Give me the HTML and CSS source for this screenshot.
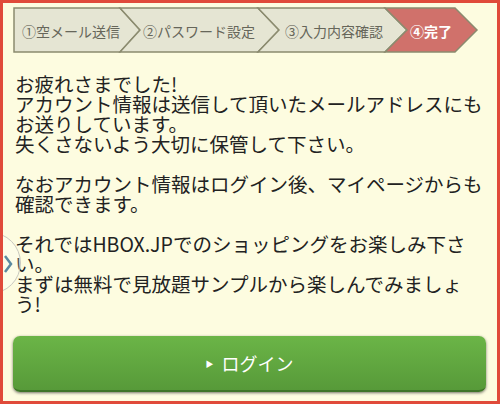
FILE: index.html
```html
<!DOCTYPE html>
<html lang="ja">

<head>
    <meta charset="UTF-8">
    <meta name="viewport" content="width=device-width, initial-scale=1.0">
    <title>登録完了</title>
    <link rel="stylesheet" href="styles.css">
</head>

<body>
    <div class="page">
        <svg class="steps" width="472" height="48" viewBox="0 0 472 48">
            <polygon class="step" points="3,1 109,1 129,23 109,45 3,45" />
            <polygon class="step" points="109,1 247,1 268,23 247,45 109,45 129,23" />
            <polygon class="step" points="247,1 374,1 396,23 374,45 247,45 268,23" />
            <polygon class="step step-now" points="374,1 444,1 466,23 444,45 374,45 396,23" />
            <text class="step-label" x="11" y="24">①空メール送信</text>
            <text class="step-label" x="132" y="24">②パスワード設定</text>
            <text class="step-label" x="274" y="24">③入力内容確認</text>
            <text class="step-label step-label-now" x="399" y="24">④完了</text>
        </svg>

        <div class="message">
            <p>お疲れさまでした!<br>アカウント情報は送信して頂いたメールアドレスにもお送りしています。<br>失くさないよう大切に保管して下さい。</p>
            <p>なおアカウント情報はログイン後、マイページからも確認できます。</p>
            <p>それではHBOX.JPでのショッピングをお楽しみ下さい。<br>まずは無料で見放題サンプルから楽しんでみましょう!</p>
        </div>

        <a class="login-btn" href="#"><span class="tri">&#9654;</span>ログイン</a>

        <div class="side-handle">
            <svg width="12" height="20" viewBox="0 0 12 20">
                <polyline points="2,2 8,10 2,18" />
            </svg>
        </div>
    </div>
</body>

</html>
```

FILE: styles.css
```css
* {
    margin: 0;
    padding: 0;
    box-sizing: border-box;
}

html,
body {
    width: 500px;
    height: 404px;
    overflow: hidden;
}

body {
    font-family: "Noto Sans CJK JP", "Noto Sans", sans-serif;
    color: #222;
}

.page {
    position: relative;
    width: 500px;
    height: 404px;
    border: 3px solid #e04a3a;
    background-color: #fdfce0;
    padding-top: 4px;
    overflow: hidden;
}

.steps {
    display: block;
    margin-left: 8px;
}

.step {
    fill: #e5e5d3;
    stroke: #8b8b6f;
    stroke-width: 1.5;
}

.step-now {
    fill: #d0716b;
}

.step-label {
    font-family: "Noto Sans CJK JP", sans-serif;
    font-size: 14px;
    fill: #66665a;
    dominant-baseline: central;
}

.step-label-now {
    fill: #fff;
    font-weight: bold;
}

.message {
    margin: 19px 0 0 12px;
    width: 471px;
    font-size: 19.5px;
    line-height: 20px;
}

.message p {
    margin-bottom: 20px;
}

.message p:last-child {
    margin-bottom: 0;
}

.login-btn {
    display: flex;
    justify-content: center;
    align-items: center;
    gap: 8px;
    height: 56px;
    margin: 22px 11px 0 10px;
    border-radius: 7px;
    background: linear-gradient(#6bb547, #579a39);
    border-bottom: 2px solid #3e7428;
    box-shadow: 0 1px 3px rgba(0, 0, 0, 0.55);
    color: #fff;
    font-size: 18px;
    text-decoration: none;
}

.login-btn .tri {
    font-size: 8px;
    margin-top: 1px;
}

.side-handle {
    position: absolute;
    left: -44px;
    top: 229px;
    width: 62px;
    height: 62px;
    border-radius: 50%;
    border: 1px solid #c9c9c0;
    background-color: rgba(255, 255, 255, 0.25);
}

.side-handle svg {
    position: absolute;
    right: 5px;
    top: 21px;
}

.side-handle polyline {
    fill: none;
    stroke: #5b8aa0;
    stroke-width: 2.5;
}
```
